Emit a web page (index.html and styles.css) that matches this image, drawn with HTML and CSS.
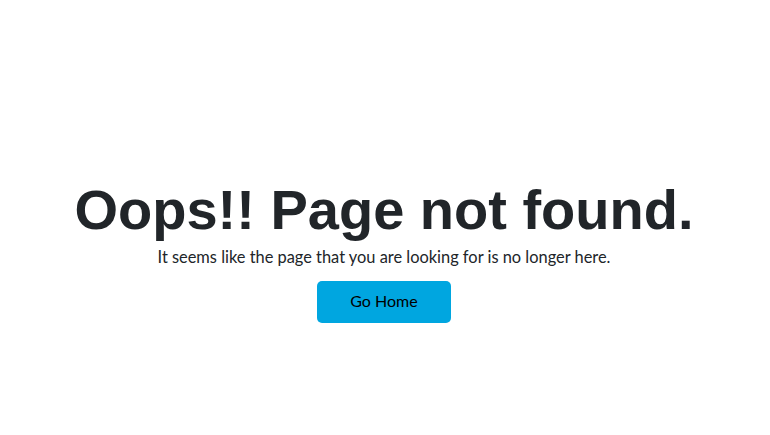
FILE: index.html
```html
<!DOCTYPE html>
<html lang="en">
<head>
  <meta charset="UTF-8">
  <meta name="viewport" content="width=device-width, initial-scale=1.0">
  <title>Page not found</title>
  <link rel="stylesheet" href="styles.css">
</head>
<body>
  <div class="not-found">
    <h1 class="title">Oops!! Page not found.</h1>
    <p class="message">It seems like the page that you are looking for is no longer here.</p>
    <a class="home-btn" href="#">Go Home</a>
  </div>
</body>
</html>
```

FILE: styles.css
```css
body {
  margin: 0;
  background-color: #fff;
  font-family: Lato, "Open Sans", sans-serif;
  color: #212529;
}
.not-found {
  display: flex;
  flex-direction: column;
  align-items: center;
  padding-top: 176px;
  padding-right: 2px;
}
.title {
  margin: 0;
  font-family: "Liberation Sans", Arial, sans-serif;
  font-size: 56px;
  font-weight: 700;
  line-height: 1.2;
  color: #212529;
}
.message {
  margin: 2px 0 12px;
  font-size: 16.4px;
  line-height: 24px;
}
.home-btn {
  display: flex;
  align-items: center;
  justify-content: center;
  box-sizing: border-box;
  width: 134px;
  height: 42px;
  padding-bottom: 3px;
  border-radius: 5px;
  background: #00a6e0;
  color: #000;
  font-size: 16px;
  text-decoration: none;
}
```
